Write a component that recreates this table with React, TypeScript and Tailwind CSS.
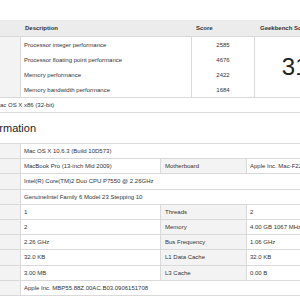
import React from "react";

const perf = [
  ["Processor integer performance", "2585"],
  ["Processor floating point performance", "4676"],
  ["Memory performance", "2422"],
  ["Memory bandwidth performance", "1684"],
];

type Row = { v: string; l2?: string; v2?: string };
const sys: Row[] = [
  { v: "Mac OS X 10.6.3 (Build 10D573)" },
  { v: "MacBook Pro (13-inch Mid 2009)", l2: "Motherboard", v2: "Apple Inc. Mac-F22587A1" },
  { v: "Intel(R) Core(TM)2 Duo CPU P7550 @ 2.26GHz" },
  { v: "GenuineIntel Family 6 Model 23 Stepping 10" },
  { v: "1", l2: "Threads", v2: "2" },
  { v: "2", l2: "Memory", v2: "4.00 GB 1067 MHz DDR3" },
  { v: "2.26 GHz", l2: "Bus Frequency", v2: "1.06 GHz" },
  { v: "32.0 KB", l2: "L1 Data Cache", v2: "32.0 KB" },
  { v: "3.00 MB", l2: "L3 Cache", v2: "0.00 B" },
  { v: "Apple Inc. MBP55.88Z.00AC.B03.0906151708" },
];

export default function App() {
  return (
    <div className="w-[300px] h-[300px] overflow-hidden bg-white font-['Liberation_Sans',Arial,sans-serif] text-[6px] text-[#333] leading-none">
      <div className="w-[420px] pt-[20px]">
        {/* Benchmark table */}
        <div className="flex h-[17px] items-center bg-[#ececec] border-b border-[#d9d9d9] font-bold">
          <div className="w-[21px] shrink-0" />
          <div className="w-[171px] shrink-0 pl-[4px]">Description</div>
          <div className="w-[63px] shrink-0 pl-[4px]">Score</div>
          <div className="pl-[5px]">Geekbench Score</div>
        </div>
        <div className="flex border-b border-[#d9d9d9]">
          <div className="w-[21px] shrink-0 bg-[#f3f3f3] border-r border-[#d9d9d9]" />
          <div className="w-[171px] shrink-0 border-r border-[#d9d9d9]">
            {perf.map(([d]) => (
              <div key={d} className="h-[15px] flex items-center pl-[3px]">{d}</div>
            ))}
          </div>
          <div className="w-[63px] shrink-0 border-r border-[#d9d9d9]">
            {perf.map(([d, s]) => (
              <div key={d} className="h-[15px] flex items-center justify-center">{s}</div>
            ))}
          </div>
          <div className="w-[107px] shrink-0 flex items-center justify-center text-[24px] text-[#222]">3124</div>
        </div>
        <div className="h-[15px] flex items-center border-b border-[#d9d9d9] overflow-hidden">
          <span className="ml-[-5px] whitespace-nowrap">Mac OS X x86 (32-bit)</span>
        </div>

        {/* Heading */}
        <div className="h-[30px] flex items-center overflow-hidden">
          <span className="ml-[-19px] text-[11px] whitespace-nowrap text-[#222]">Information</span>
        </div>

        {/* System table */}
        <div className="border-t border-[#d9d9d9]">
          {sys.map((r, i) => (
            <div key={i} className="flex h-[15.2px] border-b border-[#d9d9d9]">
              <div className="w-[21px] shrink-0 bg-[#f3f3f3] border-r border-[#d9d9d9]" />
              {r.l2 ? (
                <>
                  <div className="w-[140px] shrink-0 flex items-center pl-[3px] border-r border-[#d9d9d9]">{r.v}</div>
                  <div className="w-[86px] shrink-0 flex items-center pl-[4px] bg-[#f3f3f3] border-r border-[#d9d9d9]">{r.l2}</div>
                  <div className="flex-1 flex items-center pl-[3px] whitespace-nowrap">{r.v2}</div>
                </>
              ) : (
                <div className="flex-1 flex items-center pl-[3px] whitespace-nowrap">{r.v}</div>
              )}
            </div>
          ))}
        </div>
      </div>
    </div>
  );
}
